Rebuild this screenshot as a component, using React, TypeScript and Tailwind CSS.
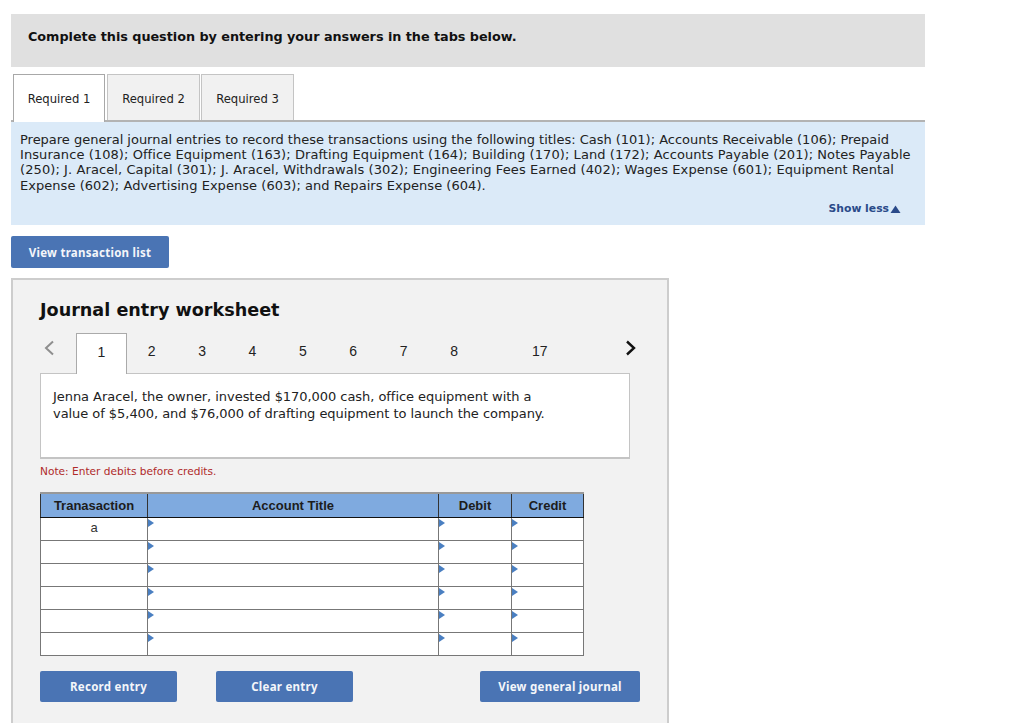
import React from 'react'

const verdana = 'font-["DejaVu_Sans",sans-serif]'
const arial = 'font-["Liberation_Sans",sans-serif]'

const steps = ['2', '3', '4', '5', '6', '7', '8']
const rows = ['a', '', '', '', '', '']

function Marker() {
  return (
    <span className="absolute left-0 top-[1px] h-0 w-0 border-y-[4.5px] border-l-[6px] border-y-transparent border-l-[#4a7fc1]" />
  )
}

function ActionButton({ label, className }: { label: string; className: string }) {
  return (
    <button
      type="button"
      className={`rounded-[2px] bg-[#4a74b4] font-["Noto_Sans",sans-serif] text-[11.5px] font-bold tracking-[0.27px] text-[#f4f6fa] ${className}`}
    >
      {label}
    </button>
  )
}

export default function App() {
  return (
    <div className={`h-[723px] overflow-hidden bg-white pl-[11px] pt-[14px] text-[#222] ${verdana}`}>
      <div className="h-[53px] w-[914px] bg-[#e0e0e0] pl-[17px] pt-[15px] text-[12.8px] leading-[16px] font-bold tracking-[-0.03px] text-[#111]">
        Complete this question by entering your answers in the tabs below.
      </div>

      <div className="mt-[7px] flex h-[48px] w-[914px] gap-[2px] border-b-2 border-[#b3b3b3] pl-[2px] text-[11.6px]">
        <div className="flex h-[48px] w-[92px] items-center justify-center border border-b-0 border-[#a8a8a8] bg-white pt-[2px]">
          Required 1
        </div>
        <div className="flex h-[46px] w-[93px] items-center justify-center border border-b-0 border-[#c4c4c4] bg-[#f1f1f1] pt-[4px]">
          Required 2
        </div>
        <div className="-ml-px flex h-[46px] w-[93px] items-center justify-center border border-b-0 border-[#c4c4c4] bg-[#f1f1f1] pt-[4px]">
          Required 3
        </div>
      </div>

      <div className="h-[103px] w-[914px] bg-[#dbeaf8] pl-[9px] pr-[8px] pt-[10px]">
        <div className="text-[13px] leading-[15.2px] whitespace-nowrap text-[#222]">
          <p className="tracking-[-0.016px]">
            Prepare general journal entries to record these transactions using the following titles: Cash (101); Accounts
            Receivable (106); Prepaid
          </p>
          <p className="tracking-[0.075px]">
            Insurance (108); Office Equipment (163); Drafting Equipment (164); Building (170); Land (172); Accounts Payable
            (201); Notes Payable
          </p>
          <p className="tracking-[0.09px]">
            (250); J. Aracel, Capital (301); J. Aracel, Withdrawals (302); Engineering Fees Earned (402); Wages Expense
            (601); Equipment Rental
          </p>
          <p className="tracking-[0.044px]">Expense (602); Advertising Expense (603); and Repairs Expense (604).</p>
        </div>
        <div className="mt-[9px] flex items-center justify-end pr-[16px] text-[10.8px] leading-[14px] font-bold text-[#2a4a8a]">
          Show less
          <svg width="11" height="8" viewBox="0 0 11 8" className="ml-[1px]">
            <path d="M5.5 0.5 L10.5 8 L0.5 8 Z" fill="#2a4a8a" />
          </svg>
        </div>
      </div>

      <ActionButton label="View transaction list" className="mt-[11px] block h-[32px] w-[158px] pt-[2px]" />

      <div className="mt-[10px] h-[460px] w-[658px] border-2 border-b-0 border-[#cdcdcd] bg-[#f2f2f2] pl-[27px] pt-[19px]">
        <h2 className="text-[17.6px] leading-[22px] font-bold text-[#111]">Journal entry worksheet</h2>

        <div className={`mt-[12px] flex h-[41px] items-start text-[14px] ${arial}`}>
          <div className="flex h-[40px] w-[36px] items-start pl-[3px] pt-[7px]">
            <svg width="12" height="16" viewBox="0 0 12 16" fill="none" stroke="#8f8f8f" strokeWidth="2">
              <path d="M10 1.5 L3 8 L10 14.5" />
            </svg>
          </div>
          <div className="relative z-10 flex h-[41px] w-[51px] items-center justify-center border border-b-0 border-[#aaa] bg-white pb-[3px] text-[#222]">
            1
          </div>
          {steps.map((step) => (
            <div key={step} className="flex h-[40px] w-[50.4px] items-center justify-center pb-[3px] pr-[1px] text-[#222]">
              {step}
            </div>
          ))}
          <div className="flex h-[40px] w-[122px] items-center justify-center pb-[3px] pr-[2px] text-[#222]">17</div>
          <div className="flex h-[40px] w-[58px] items-start justify-center pt-[7px]">
            <svg width="12" height="16" viewBox="0 0 12 16" fill="none" stroke="#111" strokeWidth="2.4">
              <path d="M2 1.5 L9 8 L2 14.5" />
            </svg>
          </div>
        </div>

        <div className="-mt-px h-[86px] w-[590px] border border-b-2 border-[#c4c4c4] bg-white pl-[12px] pt-[14px] text-[13px] leading-[17px] tracking-[-0.05px] text-[#222]">
          Jenna Aracel, the owner, invested $170,000 cash, office equipment with a
          <br />
          value of $5,400, and $76,000 of drafting equipment to launch the company.
        </div>

        <p className="mt-[5px] text-[10.6px] leading-[14px] text-[#b02a2a]">Note: Enter debits before credits.</p>

        <table className={`mt-[14px] w-[543px] table-fixed border-collapse text-[13px] ${arial}`}>
          <colgroup>
            <col className="w-[107px]" />
            <col className="w-[291px]" />
            <col className="w-[73px]" />
            <col className="w-[72px]" />
          </colgroup>
          <thead>
            <tr className="h-[24px] bg-[#7faadf] text-[#1c1c1c]">
              {['Tranasaction', 'Account Title', 'Debit', 'Credit'].map((title) => (
                <th key={title} className="border-x border-t-2 border-x-[#333] border-t-[#999] border-b border-b-[#111] p-0 font-bold">
                  {title}
                </th>
              ))}
            </tr>
          </thead>
          <tbody>
            {rows.map((value, i) => (
              <tr key={i} className="h-[23px] bg-white">
                <td className="border border-[#777] p-0 pb-[3px] text-center align-middle text-[#333]">{value}</td>
                <td className="relative border border-[#777] p-0">
                  <Marker />
                </td>
                <td className="relative border border-[#777] p-0">
                  <Marker />
                </td>
                <td className="relative border border-[#777] p-0">
                  <Marker />
                </td>
              </tr>
            ))}
          </tbody>
        </table>

        <div className="mt-[15px] flex w-[600px]">
          <ActionButton label="Record entry" className="h-[31px] w-[137px]" />
          <ActionButton label="Clear entry" className="ml-[39px] h-[31px] w-[137px]" />
          <ActionButton label="View general journal" className="ml-[127px] h-[31px] w-[160px]" />
        </div>
      </div>
    </div>
  )
}
